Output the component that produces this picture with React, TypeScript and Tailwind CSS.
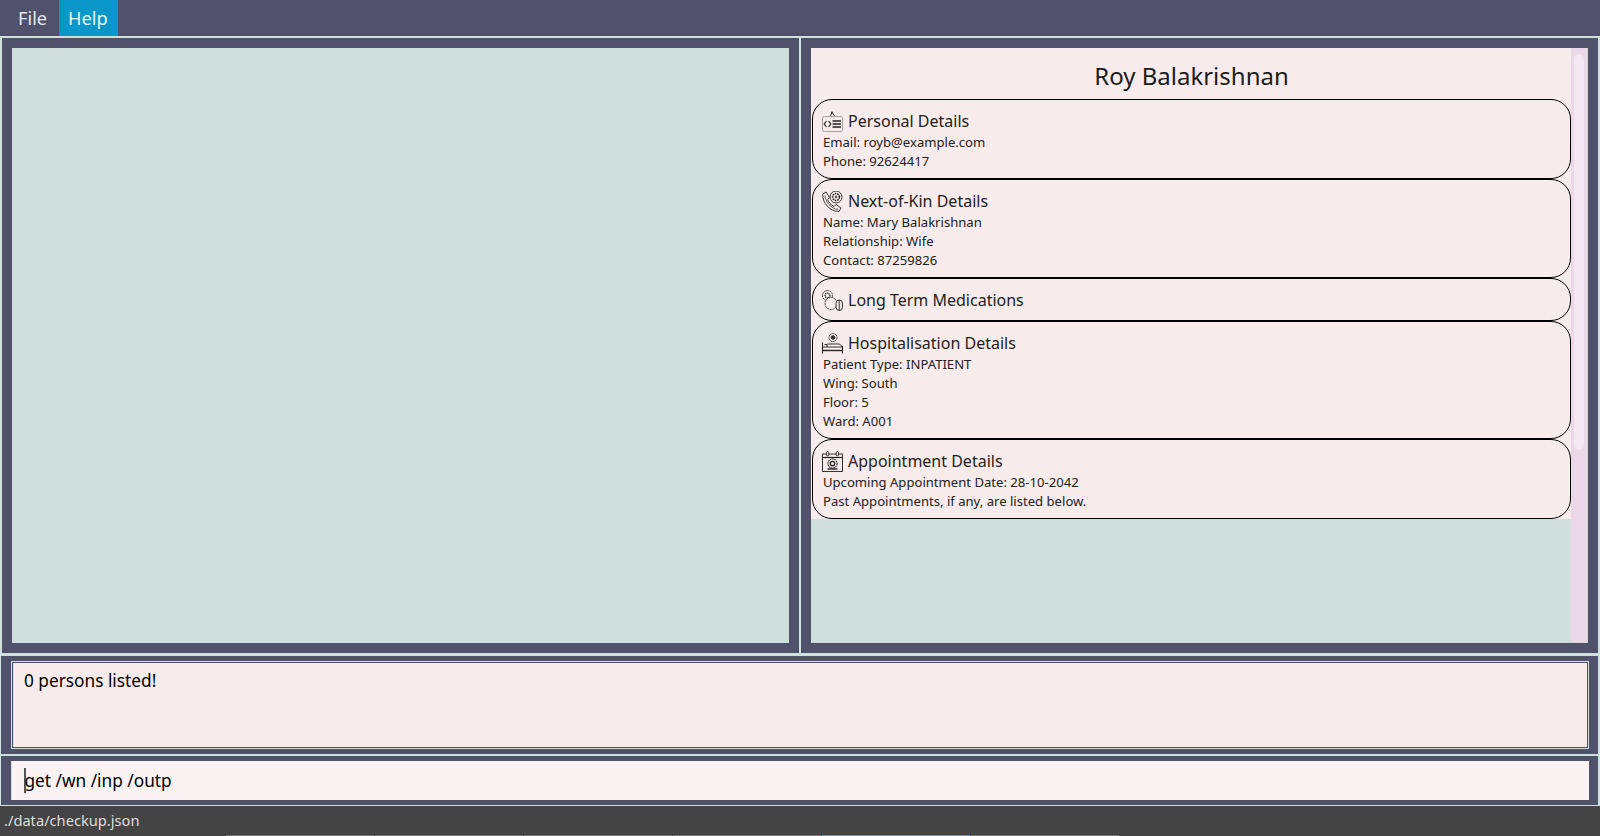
const PersonalIcon = () => (
  <svg width="21" height="21" viewBox="0 0 21 21" fill="none" stroke="#222" strokeWidth="0.9">
    <path d="M8.5 5 L10 1 L12.5 5" />
    <circle cx="10" cy="1.5" r="1" fill="#333" stroke="none" />
    <rect x="0.5" y="5.5" width="20" height="15" rx="2" stroke="#999" />
    <path d="M4.5 10 L2.2 13 L4.5 16 M6.5 10 L8.8 13 L6.5 16" strokeWidth="1.2" />
    <path d="M10.5 10 H19 M10.5 13 H19 M10.5 16 H19" strokeWidth="1.4" />
  </svg>
);

const PhoneIcon = () => (
  <svg width="21" height="21" viewBox="0 0 21 21" fill="none" stroke="#222" strokeWidth="0.9">
    <path d="M0.8 3 L4 1 L7.5 6.5 L5.5 8.5 C6.5 11.5 9 14 12 15.5 L14 13.5 L19 17 L17 20.5 C8 20.5 0 12 0.8 3 Z" />
    <path d="M3 4.5 C3 10 9 18 16.5 18.5" strokeWidth="0.7" />
    <circle cx="14" cy="6" r="6" />
    <circle cx="14" cy="6" r="3.4" strokeDasharray="1.6 0.8" strokeWidth="1.5" />
    <path d="M12.7 6 H15.3 M14 4.7 V7.3" />
  </svg>
);

const PillsIcon = () => (
  <svg width="21" height="21" viewBox="0 0 21 21" fill="none" stroke="#222" strokeWidth="0.9">
    <circle cx="5.5" cy="5.5" r="5" strokeDasharray="1.6 0.7" />
    <circle cx="5.5" cy="5.5" r="2.4" strokeDasharray="1 0.6" strokeWidth="1.4" />
    <circle cx="9" cy="13.5" r="6" strokeDasharray="2 0.8" fill="#f7ebeb" />
    <rect x="14" y="10" width="6.5" height="10.5" rx="3.2" fill="#f7ebeb" />
    <path d="M17.2 10 V20.5" />
  </svg>
);

const BedIcon = () => (
  <svg width="21" height="21" viewBox="0 0 21 21" fill="none" stroke="#222" strokeWidth="0.9">
    <circle cx="11" cy="4.5" r="4" strokeDasharray="1.5 0.7" />
    <circle cx="11" cy="4.5" r="1.8" fill="#333" />
    <path d="M0.5 9.5 V20.5" strokeWidth="1.1" />
    <path d="M20.5 13 V20.5" strokeWidth="1.1" />
    <path d="M5 11 H17.5 L20.5 14 H1" />
    <path d="M0.5 17.5 H20.5" strokeWidth="1.4" />
    <path d="M2.5 11.5 H5 V14" />
  </svg>
);

const CalendarIcon = () => (
  <svg width="21" height="21" viewBox="0 0 21 21" fill="none" stroke="#222" strokeWidth="0.9">
    <rect x="0.5" y="3" width="20" height="17.5" />
    <path d="M0.5 6.5 H20.5" strokeWidth="1.2" />
    <rect x="4.5" y="0.5" width="2.2" height="4.5" rx="1.1" fill="#f7ebeb" />
    <rect x="14.3" y="0.5" width="2.2" height="4.5" rx="1.1" fill="#f7ebeb" />
    <circle cx="10.5" cy="12.5" r="4.6" strokeDasharray="1.6 0.7" strokeWidth="1.1" />
    <circle cx="10.5" cy="12.5" r="2.2" strokeWidth="1.3" />
    <path d="M5.5 18 H15.5" strokeWidth="1.4" />
  </svg>
);

const cards = [
  { title: "Personal Details", icon: <PersonalIcon />, lines: ["Email: royb@example.com", "Phone: 92624417"] },
  {
    title: "Next-of-Kin Details",
    icon: <PhoneIcon />,
    lines: ["Name: Mary Balakrishnan", "Relationship: Wife", "Contact: 87259826"],
  },
  { title: "Long Term Medications", icon: <PillsIcon />, lines: [] },
  {
    title: "Hospitalisation Details",
    icon: <BedIcon />,
    lines: ["Patient Type: INPATIENT", "Wing: South", "Floor: 5", "Ward: A001"],
  },
  {
    title: "Appointment Details",
    icon: <CalendarIcon />,
    lines: ["Upcoming Appointment Date: 28-10-2042", "Past Appointments, if any, are listed below."],
  },
];

export default function App() {
  return (
    <div className="flex h-[836px] w-[1600px] flex-col overflow-hidden bg-[#50526b] font-['Noto_Sans',sans-serif]">
      <div className="flex h-9 shrink-0 pl-[9px] text-[18.2px] leading-9 text-[#e6e6ee]">
        <div className="w-[50px] px-[9px]">File</div>
        <div className="w-[59px] bg-[#0a96c8] px-[9px] text-[#e8f6fb]">Help</div>
      </div>

      <div className="flex h-[619px] shrink-0 border-x-2 border-y-2 border-[#d0dfdb]">
        <div className="w-[799px] shrink-0 border-r-2 border-[#d0dfdb] p-[10px]">
          <div className="h-full bg-[#d0dfdb]" />
        </div>
        <div className="min-w-0 flex-1 p-[10px]">
          <div className="flex h-full border-r border-b border-[#d8d4d0] bg-[#d0dfdb]">
            <div className="w-[760px] shrink-0">
              <div className="bg-[#f7ebeb] pl-px">
                <div className="h-[51px] pt-[11px] text-center text-[24px] leading-[34px] text-[#1c1c1c]">
                  Roy Balakrishnan
                </div>
                {cards.map((card) => (
                  <div
                    key={card.title}
                    className={
                      card.lines.length
                        ? "rounded-[20px] border border-black pt-[9px] pb-[7px] pl-[10px] text-[13.1px] leading-[19px] text-[#222]"
                        : "rounded-[20px] border border-black pt-[9px] pb-[8px] pl-[10px] text-[13.1px] leading-[19px] text-[#222]"
                    }
                  >
                    <div className="-ml-px flex h-6 items-center gap-[5px] text-[16px] text-[#222]">
                      {card.icon}
                      <span>{card.title}</span>
                    </div>
                    {card.lines.map((line) => (
                      <div key={line}>{line}</div>
                    ))}
                  </div>
                ))}
              </div>
            </div>
            <div className="min-w-0 flex-1 bg-[#ead7e8] px-[3px] pt-[6px]">
              <div className="h-[396px] rounded-[5px] bg-[#f3e7f2]" />
            </div>
          </div>
        </div>
      </div>

      <div className="h-[101px] shrink-0 border-t border-r-2 border-b-2 border-l border-[#d0dfdb] py-[5px] pr-[9px] pl-[10px]">
        <div className="h-[88px] border border-[#d0dfdb]">
          <div className="h-full border border-[#50526b]">
            <div className="h-full border-l border-[#d0dfdb] bg-[#f7ebeb] pt-[5px] pl-[10px] text-[17.25px] leading-[26px] text-black">
              0 persons listed!
            </div>
          </div>
        </div>
      </div>

      <div className="h-[50px] shrink-0 border-r-2 border-b border-l border-[#d0dfdb] pt-[5px] pr-[9px] pl-[10px]">
        <div className="flex h-[39px] items-center border-l border-[#d0dfdb] bg-[#faf2f3] pl-[12px] text-[17.25px] text-black">
          <div className="-mr-px h-[25px] w-[1.5px] bg-[#555]" />
          <span>get /wn /inp /outp</span>
        </div>
      </div>

      <div className="flex min-h-0 flex-1 flex-col bg-[#444444]">
        <div className="flex-1 pl-[4px] text-[14.67px] leading-[28px] text-[#dddddd]">./data/checkup.json</div>
        <div className="flex h-px gap-[1px] pl-[226px]">
          <div className="w-[148px] bg-[#777]" />
          <div className="w-[148px] bg-[#777]" />
          <div className="w-[148px] bg-[#777]" />
          <div className="w-[148px] bg-[#777]" />
          <div className="w-[148px] bg-[#4aa3dc]" />
          <div className="w-[148px] bg-[#777]" />
        </div>
      </div>
    </div>
  );
}
